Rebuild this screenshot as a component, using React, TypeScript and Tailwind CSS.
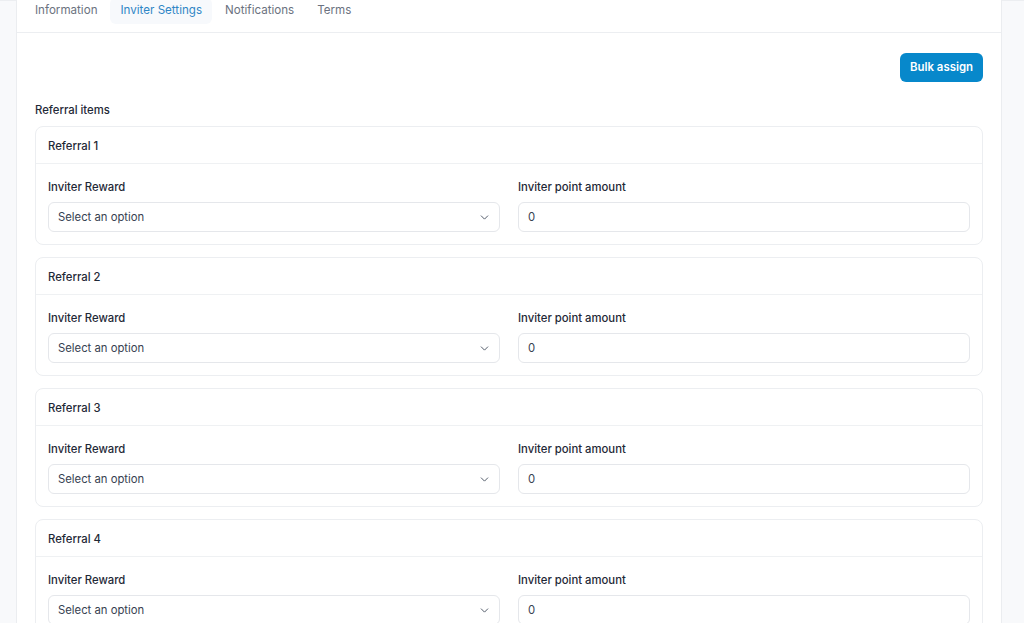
import { ChevronDown } from 'lucide-react';

export default function App() {
    const tabs = ['Information', 'Inviter Settings', 'Notifications', 'Terms'];
    const referrals = [1, 2, 3, 4];

    return (
        <div className="min-h-screen bg-[#f8f9fb] overflow-hidden" style={{ fontFamily: 'Inter, "Noto Sans", sans-serif' }}>
            <div className="h-px bg-[#eceef1]" />
            <div className="ml-4 w-[986px] -mt-[4px] bg-white border border-[#ebedf0]">
                {/* Tabs */}
                <div className="flex items-start gap-[3px] px-2 pb-[8px] border-b border-[#eceef1]">
                    {tabs.map((tab) => (
                        <div
                            key={tab}
                            className={`h-[26px] px-[10px] flex items-center rounded-md text-[11.6px] ${tab === 'Inviter Settings' ? 'bg-[#f7f9fc] text-[#2f86c6]' : 'text-[#6b7280]'}`}
                        >
                            {tab}
                        </div>
                    ))}
                </div>

                <div className="px-[18px] pt-5 pb-6">
                    <div className="flex justify-end">
                        <button className="h-[29px] px-[10px] rounded-md bg-[#0788cb] text-white text-[11.4px] font-semibold">
                            Bulk assign
                        </button>
                    </div>

                    <p className="mt-5 mb-2 text-[11.3px] leading-4 font-medium text-[#1f2937]">Referral items</p>

                    <div className="space-y-3">
                        {referrals.map((n) => (
                            <div key={n} className="rounded-lg border border-[#eceef1] bg-white">
                                <div className="px-3 pt-[11px] pb-[9px] border-b border-[#eff1f3] text-[11.3px] leading-4 font-medium text-[#1f2937]">
                                    Referral {n}
                                </div>
                                <div className="px-3 pt-[15px] pb-3 grid grid-cols-2 gap-[18px]">
                                    <div>
                                        <p className="mb-[7px] text-[11.3px] leading-4 font-medium text-[#1f2937]">Inviter Reward</p>
                                        <div className="h-[30px] rounded-md border border-[#e5e7eb] pl-[9px] pr-[8px] flex items-center justify-between text-[11.3px] text-[#374151]">
                                            <span>Select an option</span>
                                            <ChevronDown size={13} strokeWidth={1.75} className="text-[#4b5563]" />
                                        </div>
                                    </div>
                                    <div>
                                        <p className="mb-[7px] text-[11.3px] leading-4 font-medium text-[#1f2937]">Inviter point amount</p>
                                        <div className="h-[30px] rounded-md border border-[#e5e7eb] pl-[9px] flex items-center text-[11.3px] text-[#374151]">
                                            0
                                        </div>
                                    </div>
                                </div>
                            </div>
                        ))}
                    </div>
                </div>
            </div>
        </div>
    );
}
